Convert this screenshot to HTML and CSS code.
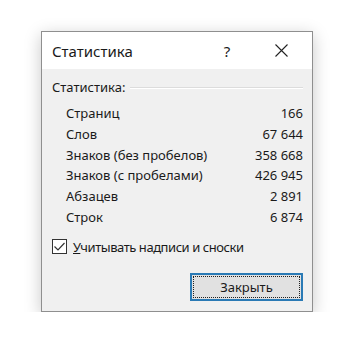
FILE: index.html
```html
<!DOCTYPE html>
<html lang="ru">
<head>
<meta charset="utf-8">
<link rel="stylesheet" href="styles.css">
</head>
<body>
<div class="stage">
  <div class="dialog">
    <div class="titlebar">
      <span class="title">Статистика</span>
      <span class="help">?</span>
      <span class="close">
        <svg width="13" height="13" viewBox="0 0 13 13"><path d="M0.5 0.5 L12.5 12.5 M12.5 0.5 L0.5 12.5" stroke="#222" stroke-width="1.1" fill="none"/></svg>
      </span>
    </div>
    <div class="body">
      <div class="group">
        <span class="group-label">Статистика:</span>
        <span class="group-line"></span>
      </div>
      <div class="stats">
        <div class="row"><span>Страниц</span><span>166</span></div>
        <div class="row"><span>Слов</span><span>67 644</span></div>
        <div class="row"><span>Знаков (без пробелов)</span><span>358 668</span></div>
        <div class="row"><span>Знаков (с пробелами)</span><span>426 945</span></div>
        <div class="row"><span>Абзацев</span><span>2 891</span></div>
        <div class="row"><span>Строк</span><span>6 874</span></div>
      </div>
      <label class="check">
        <span class="box">
          <svg width="13" height="13" viewBox="0 0 13 13"><path d="M1.5 6.5 L5 10 L11.5 3" stroke="#333" stroke-width="1.2" fill="none"/></svg>
        </span>
        <span class="check-text"><u>У</u>читывать надписи и сноски</span>
      </label>
      <div class="actions">
        <button class="btn"><span class="focus">Закрыть</span></button>
      </div>
    </div>
  </div>
</div>
</body>
</html>
```
FILE: styles.css
```css
html, body {
  margin: 0;
  padding: 0;
  background: #fff;
}
body {
  font-family: "Noto Sans", "Open Sans", sans-serif;
  color: #1a1a1a;
}
.stage {
  padding: 31px 0 0 41px;
}
.dialog {
  width: 270px;
  height: 279px;
  border: 1px solid #8f8f8f;
  background: #f0f0f0;
  box-shadow: 0 4px 16px rgba(0,0,0,0.22);
  display: flex;
  flex-direction: column;
}
.titlebar {
  height: 37px;
  background: #fff;
  display: flex;
  align-items: center;
  padding-left: 10px;
}
.title {
  font-size: 15px;
  flex: 1;
  color: #1a1a1a;
}
.help {
  font-size: 15px;
  width: 20px;
  text-align: center;
  margin-right: 38px;
}
.close {
  width: 14px;
  display: flex;
  margin-right: 23px;
}
.body {
  padding: 8px 9px 0 10px;
  font-size: 13px;
}
.group {
  display: flex;
  align-items: center;
  height: 20px;
}
.group-label {
  margin-right: 5px;
}
.group-line {
  flex: 1;
  height: 0;
  border-top: 1px solid #dcdcdc;
  border-bottom: 1px solid #fff;
  margin-top: 1px;
}
.stats {
  padding: 6px 0 0 14px;
}
.row {
  display: flex;
  justify-content: space-between;
  height: 20.8px;
  line-height: 20.8px;
}
.check {
  display: flex;
  align-items: center;
  margin-top: 11px;
  height: 16px;
}
.check-text {
  letter-spacing: -0.45px;
}
.box {
  width: 13px;
  height: 13px;
  border: 1px solid #333;
  background: #fff;
  margin-right: 6px;
  display: flex;
}
.actions {
  display: flex;
  justify-content: flex-end;
  margin-top: 18px;
  padding-right: 0;
}
.btn {
  width: 113px;
  height: 28px;
  border: 2px solid #2a7ab5;
  background: #e1e1e1;
  padding: 1px;
  font: inherit;
  font-size: 13px;
  color: #1a1a1a;
  display: flex;
}
.focus {
  flex: 1;
  border: 1px dotted #222;
  display: flex;
  align-items: center;
  justify-content: center;
}
```
